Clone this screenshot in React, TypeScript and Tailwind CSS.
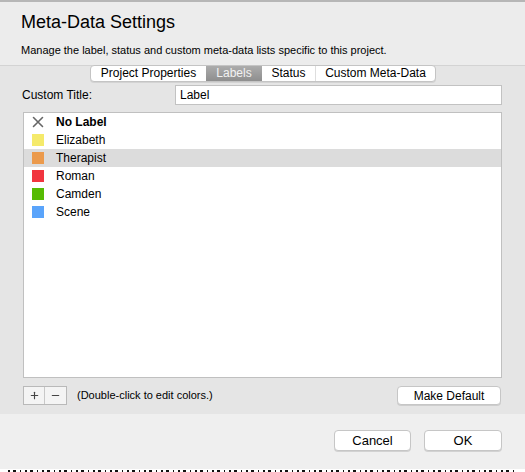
import React from 'react';
import { Plus, Minus } from 'lucide-react';

const labels = [
  { name: 'Elizabeth', color: 'bg-[#f5ea6b]' },
  { name: 'Therapist', color: 'bg-[#eb9a4c]', selected: true },
  { name: 'Roman', color: 'bg-[#f1353f]' },
  { name: 'Camden', color: 'bg-[#56bb03]' },
  { name: 'Scene', color: 'bg-[#5aa4fb]' },
];

const tabs = ['Project Properties', 'Labels', 'Status', 'Custom Meta-Data'];
const tabWidths = ['w-[115px]', 'w-[56px]', 'w-[53px]', 'w-[120px]'];

export default function App() {
  return (
    <div
      className="w-[525px] h-[472px] flex flex-col bg-[#ececec] text-[#222] overflow-hidden"
      style={{ fontFamily: '"Liberation Sans", Arial, sans-serif' }}
    >
      {/* header */}
      <div className="h-[65px] border-t-2 border-[#b6b6b6] px-[21px] pt-[9px]">
        <h1 className="text-[18px] leading-[22px] text-black">Meta-Data Settings</h1>
        <p className="mt-[10px] text-[11px] leading-[14px] text-black">
          Manage the label, status and custom meta-data lists specific to this project.
        </p>
      </div>

      {/* body */}
      <div className="h-[349px] bg-[#e5e5e5] border-t border-[#d3d3d3] flex flex-col">
        <div className="-mt-px flex justify-center pl-[1px]">
          <div className="flex h-[17px] rounded-[4px] border border-[#c4c4c4] bg-white shadow-[0_1px_0_rgba(0,0,0,0.08)] overflow-hidden text-[12px] leading-[15px]">
            {tabs.map((t, i) => (
              <div
                key={t}
                className={
                  tabWidths[i] +
                  ' flex items-center justify-center ' +
                  (t === 'Labels'
                    ? 'bg-gradient-to-b from-[#acacac] to-[#8e8e8e] text-[#f2f2f2]'
                    : 'text-black') +
                  (i === 3 ? ' border-l border-[#dedede]' : '')
                }
              >
                {t}
              </div>
            ))}
          </div>
        </div>

        <div className="flex items-center mt-[3px] pl-[22px] pr-[23px] h-[20px]">
          <span className="w-[153px] text-[12px] text-black">Custom Title:</span>
          <div className="flex-1 h-[20px] bg-white border border-[#c2c2c2] px-[4px] text-[12px] leading-[18px] text-black">
            Label
          </div>
        </div>

        <div className="mx-[23px] mt-[7px] h-[266px] bg-white border border-[#c0c0c0]">
          <div className="flex items-center h-[18px] text-[12px]">
            <svg width="12" height="12" viewBox="0 0 12 12" className="ml-[8px]">
              <path d="M1.5 1.5L10.5 10.5M10.5 1.5L1.5 10.5" stroke="#666" strokeWidth="1.6" strokeLinecap="round" />
            </svg>
            <span className="ml-[12px] font-bold text-black">No Label</span>
          </div>
          {labels.map((l) => (
            <div
              key={l.name}
              className={
                'flex items-center h-[18px] text-[12px] text-black ' +
                (l.selected ? 'bg-[#dcdcdc]' : '')
              }
            >
              <span className={'ml-[8px] w-[12px] h-[12px] ' + l.color} />
              <span className="ml-[12px]">{l.name}</span>
            </div>
          ))}
        </div>

        <div className="flex items-center mt-[8px] pl-[23px] pr-[24px]">
          <div className="flex h-[19px] border border-[#b9b9b9] bg-[#f4f4f4]">
            <span className="w-[21px] flex items-center justify-center border-r border-[#c8c8c8]">
              <Plus size={11} strokeWidth={2.5} className="text-[#444]" />
            </span>
            <span className="w-[21px] flex items-center justify-center">
              <Minus size={11} strokeWidth={2.5} className="text-[#444]" />
            </span>
          </div>
          <span className="ml-[10px] text-[11px] text-black">(Double-click to edit colors.)</span>
          <button className="ml-auto w-[104px] h-[19px] rounded-[4px] bg-white border border-[#c6c6c6] shadow-[0_1px_0_rgba(0,0,0,0.1)] text-[12px] leading-[16px] text-black">
            Make Default
          </button>
        </div>
      </div>

      {/* footer */}
      <div className="h-[55px] bg-[#efefef] flex justify-end items-start pt-[16px] pr-[23px] gap-[13px]">
        <button className="w-[77px] h-[21px] rounded-[4px] bg-white border border-[#c6c6c6] shadow-[0_1px_0_rgba(0,0,0,0.12)] text-[13px] leading-[18px] text-black">
          Cancel
        </button>
        <button className="w-[78px] h-[21px] rounded-[4px] bg-white border border-[#c6c6c6] shadow-[0_1px_0_rgba(0,0,0,0.12)] text-[13px] leading-[18px] text-black">
          OK
        </button>
      </div>

      {/* edge of the page under the sheet */}
      <div className="h-[3px] bg-white flex items-start pl-[8px]">
        <div className="mt-[1px] h-[2px] w-[510px] bg-[repeating-linear-gradient(90deg,#111_0_2px,transparent_2px_5px,#111_5px_8px,transparent_8px_12px,#111_12px_13px,transparent_13px_17px)]" />
      </div>
    </div>
  );
}
